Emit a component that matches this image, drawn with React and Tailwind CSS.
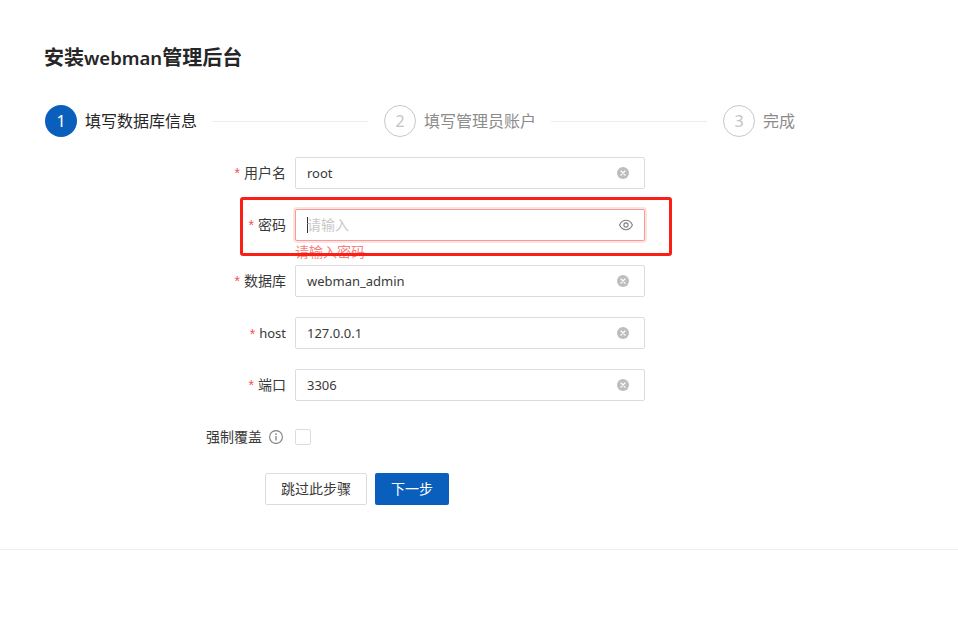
import React from 'react';

const fontStack = 'font-["Noto_Sans","Noto_Sans_CJK_SC",sans-serif]';

const steps = [
  { num: 1, label: '填写数据库信息', active: true },
  { num: 2, label: '填写管理员账户', active: false },
  { num: 3, label: '完成', active: false },
];

const ClearIcon = () => (
  <svg width="12" height="12" viewBox="0 0 12 12" className="shrink-0">
    <circle cx="6" cy="6" r="6" fill="#bdbdbd" />
    <path d="M4 4l4 4M8 4l-4 4" stroke="#fff" strokeWidth="1.2" strokeLinecap="round" />
  </svg>
);

const EyeIcon = () => (
  <svg width="14" height="14" viewBox="0 0 14 14" fill="none" stroke="#7f7f7f" strokeWidth="1.1" className="-mr-1 shrink-0">
    <path d="M.6 7C2.2 3.400 4.400 2.300 7 2.300s4.800 1.100 6.400 4.700c-1.600 3.600-3.800 4.700-6.400 4.700S2.200 10.600.6 7z" />
    <circle cx="7" cy="7" r="2.100" />
  </svg>
);

const InfoIcon = () => (
  <svg width="14" height="14" viewBox="0 0 14 14" fill="none" className="mr-[3px] shrink-0">
    <circle cx="7" cy="7" r="6.400" stroke="#7f7f7f" strokeWidth="1.100" />
    <path d="M7 6v4.400" stroke="#7f7f7f" strokeWidth="1.300" />
    <circle cx="7" cy="4.100" r=".9" fill="#7f7f7f" />
  </svg>
);

const Step = ({ num, label, active, last }) => (
  <div className={`flex items-center ${last ? '' : 'w-[339px]'}`}>
    <div
      className={`flex h-8 w-8 shrink-0 items-center justify-center rounded-full text-base ${
        active ? 'bg-[#0a5fbd] text-white' : 'border border-[#c8c8c8] text-[#c4c4c4]'
      }`}
    >
      {num}
    </div>
    <span className={`ml-2 whitespace-nowrap text-base ${active ? 'text-[#262626]' : 'text-[#8c8c8c]'}`}>{label}</span>
    {!last && <div className="mr-4 ml-[15px] h-px flex-1 bg-[#ececec]" />}
  </div>
);

const Field = ({ label, value, error, latin }) => (
  <div className={`flex ${error ? 'mb-6' : 'mb-5'} h-8 items-center`}>
    <label className={`flex w-[241px] items-center justify-end text-[#3a3a3a] ${latin ? 'pt-px text-[13px]' : 'text-sm'}`}>
      <span className="mr-1 font-['Liberation_Sans',sans-serif] text-sm text-[#f5504e]">*</span>
      {label}
    </label>
    <div className="relative ml-[9px]">
      <div
        className={`flex h-8 w-[350px] items-center rounded-[2px] border bg-white pl-[11px] pr-[15px] ${
          error ? 'border-[#f79a98] shadow-[0_0_0_2px_#fde4e3]' : 'border-[#dcdcdc]'
        }`}
      >
        {error ? (
          <>
            <span className="h-4 w-px bg-[#333]" />
            <span className="-ml-px flex-1 text-sm text-[#c8c8c8]">请输入</span>
            <EyeIcon />
          </>
        ) : (
          <>
            <span className="flex-1 pt-px text-[13px] text-[#3a3a3a]">{value}</span>
            <ClearIcon />
          </>
        )}
      </div>
      {error && <p className="absolute left-0 top-[32px] text-sm leading-[22px] text-[#f5807e]">{error}</p>}
    </div>
  </div>
);

const App = () => {
  return (
    <div className={`relative h-[620px] w-[958px] overflow-hidden bg-white ${fontStack}`}>
      <div className="h-[550px] border-b border-[#eeeeee] pl-[45px] pt-[44px]">
        <h1 className="-ml-px text-xl leading-7 font-bold text-[#262626]">
          安装<span className="text-[18.5px] font-semibold">webman</span>管理后台
        </h1>
        <div className="mt-[33px] mb-5 flex">
          {steps.map((s, i) => (
            <Step key={s.num} {...s} last={i === steps.length - 1} />
          ))}
        </div>
        <Field label="用户名" value="root" />
        <Field label="密码" error="请输入密码" />
        <Field label="数据库" value="webman_admin" />
        <Field label="host" value="127.0.0.1" latin />
        <Field label="端口" value="3306" />
        <div className="mb-5 flex h-8 items-center">
          <label className="flex w-[241px] items-center justify-end gap-[7px] text-sm text-[#3a3a3a]">
            强制覆盖
            <InfoIcon />
          </label>
          <span className="ml-[9px] h-4 w-4 rounded-[2px] border border-[#dcdcdc]" />
        </div>
        <div className="ml-[220px] flex gap-2">
          <button className="h-8 w-[102px] rounded-[2px] border border-[#dcdcdc] bg-white text-sm text-[#3a3a3a]">跳过此步骤</button>
          <button className="h-8 w-[74px] rounded-[2px] bg-[#0a5fbd] text-sm text-white">下一步</button>
        </div>
      </div>
      {/* annotation drawn over the screenshot */}
      <div className="absolute left-[240px] top-[197px] h-[59px] w-[432px] rounded-[3px] border-[3px] border-[#fa1f14]" />
    </div>
  );
};

export default App;
